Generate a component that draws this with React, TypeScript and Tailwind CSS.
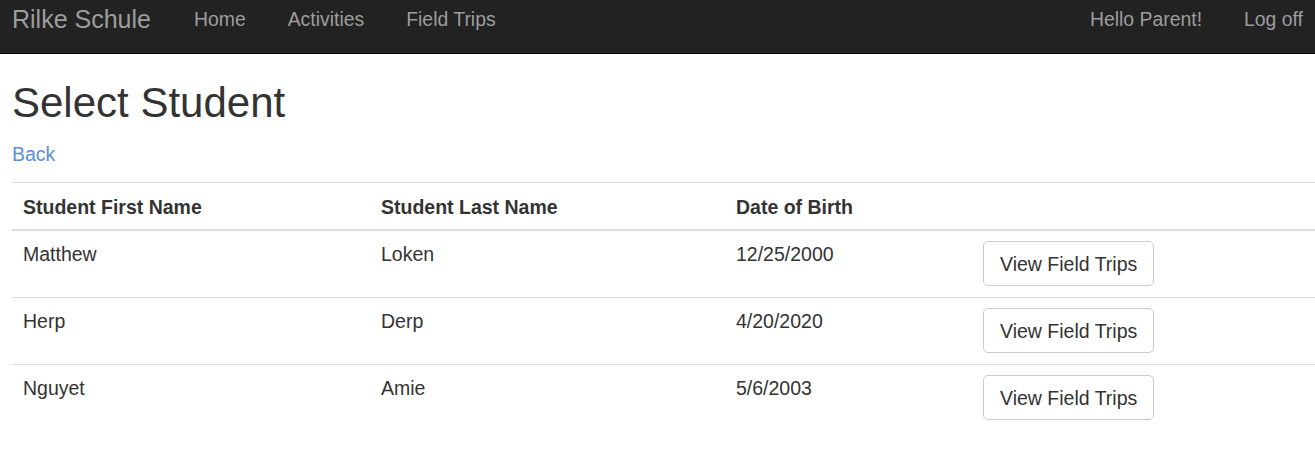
const students = [
  { first: 'Matthew', last: 'Loken', dob: '12/25/2000' },
  { first: 'Herp', last: 'Derp', dob: '4/20/2020' },
  { first: 'Nguyet', last: 'Amie', dob: '5/6/2003' },
];

function Navbar() {
  return (
    <nav className="box-border flex h-[54px] items-start justify-between border-b border-[#080808] bg-[#222] px-[12px] pt-[5px] text-[#9d9d9d]">
      <div className="flex items-start gap-[43px]">
        <a href="#" className="text-[25px] leading-[28px]">
          Rilke Schule
        </a>
        <ul className="flex gap-[42px] text-[19.4px] leading-[28px]">
          <li>
            <a href="#">Home</a>
          </li>
          <li>
            <a href="#">Activities</a>
          </li>
          <li>
            <a href="#">Field Trips</a>
          </li>
        </ul>
      </div>
      <ul className="flex gap-[42px] text-[19.4px] leading-[28px]">
        <li>
          <a href="#">Hello Parent!</a>
        </li>
        <li>
          <a href="#">Log off</a>
        </li>
      </ul>
    </nav>
  );
}

export default function App() {
  return (
    <div className="min-h-screen bg-white text-[#333] font-['Liberation_Sans',Arial,sans-serif] text-[19.5px] leading-[28px] overflow-hidden">
      <Navbar />
      <main className="pl-[12px]">
        <h2 className="mt-[26px] text-[42px] leading-[46px] font-normal">Select Student</h2>
        <p className="mt-[14px] mb-[14px]">
          <a href="#" className="text-[#5a8fd6]">
            Back
          </a>
        </p>
        <table className="w-full table-fixed border-collapse text-left">
          <colgroup>
            <col className="w-[358px]" />
            <col className="w-[355px]" />
            <col className="w-[247px]" />
            <col />
          </colgroup>
          <thead>
            <tr className="border-t border-[#ddd]">
              <th className="border-b-2 border-[#ddd] px-[11px] pt-[10px] pb-[8px] align-bottom font-bold">
                Student First Name
              </th>
              <th className="border-b-2 border-[#ddd] px-[11px] pt-[10px] pb-[8px] align-bottom font-bold">
                Student Last Name
              </th>
              <th className="border-b-2 border-[#ddd] px-[11px] pt-[10px] pb-[8px] align-bottom font-bold">
                Date of Birth
              </th>
              <th className="border-b-2 border-[#ddd] px-[11px] pt-[10px] pb-[8px]"></th>
            </tr>
          </thead>
          <tbody>
            {students.map((s, i) => (
              <tr key={s.first} className={i > 0 ? 'border-t border-[#ddd]' : ''}>
                <td className="px-[11px] pt-[9px] pb-[11px] align-top">{s.first}</td>
                <td className="px-[11px] pt-[9px] pb-[11px] align-top">{s.last}</td>
                <td className="px-[11px] pt-[9px] pb-[11px] align-top">{s.dob}</td>
                <td className="px-[11px] pt-[10px] pb-[11px] align-top">
                  <button className="box-border h-[45px] rounded-[5px] border border-[#ccc] bg-white px-[16px] text-[19.5px] leading-[28px] text-[#333]">
                    View Field Trips
                  </button>
                </td>
              </tr>
            ))}
          </tbody>
        </table>
      </main>
    </div>
  );
}
